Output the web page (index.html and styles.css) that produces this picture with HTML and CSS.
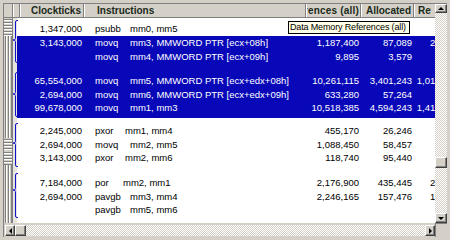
FILE: index.html
```html
<!DOCTYPE html>
<html>
<head>
<meta charset="utf-8">
<link rel="stylesheet" href="styles.css">
</head>
<body>
<div class="frame">
  <div class="main">
    <div class="hdr">
      <div class="hc ha"></div>
      <div class="hc hb"></div>
      <div class="hc hclk">Clockticks</div>
      <div class="hc hins">Instructions</div>
      <div class="hc hdmr"><span>Data Memory References (all)</span></div>
      <div class="hc hal">Allocated</div>
      <div class="hc hre">Retired</div>
      <div class="hc hfill"></div>
    </div>
    <div class="body">
      <div class="row hs h3"><div class="g"></div></div>
      <div class="row hs h15"><div class="g"></div><div class="c clk">1,347,000</div><div class="c ins"><span class="mn">psubb</span>mm0, mm5</div><div class="c dmr"></div><div class="c al"></div><div class="c re"></div></div>
      <div class="row sel h14"><div class="g"></div><div class="c clk">3,143,000</div><div class="c ins"><span class="mn">movq</span>mm3, MMWORD PTR [ecx+08h]</div><div class="c dmr">1,187,400</div><div class="c al">87,089</div><div class="c re">23,580</div></div>
      <div class="row sel h13"><div class="g"></div><div class="c clk"></div><div class="c ins"><span class="mn">movq</span>mm4, MMWORD PTR [ecx+09h]</div><div class="c dmr">9,895</div><div class="c al">3,579</div><div class="c re"></div></div>
      <div class="row sel h11"><div class="g"></div></div>
      <div class="row sel h14"><div class="g"></div><div class="c clk">65,554,000</div><div class="c ins"><span class="mn">movq</span>mm5, MMWORD PTR [ecx+edx+08h]</div><div class="c dmr">10,261,115</div><div class="c al">3,401,243</div><div class="c re">1,012,390</div></div>
      <div class="row sel h13"><div class="g"></div><div class="c clk">2,694,000</div><div class="c ins"><span class="mn">movq</span>mm6, MMWORD PTR [ecx+edx+09h]</div><div class="c dmr">633,280</div><div class="c al">57,264</div><div class="c re"></div></div>
      <div class="row sel h13"><div class="g"></div><div class="c clk">99,678,000</div><div class="c ins"><span class="mn">movq</span>mm1, mm3</div><div class="c dmr">10,518,385</div><div class="c al">4,594,243</div><div class="c re">1,415,220</div></div>
      <div class="row sel h4"><div class="g"></div></div>
      <div class="row h6"><div class="g"></div></div>
      <div class="row h14"><div class="g"></div><div class="c clk">2,245,000</div><div class="c ins"><span class="mn w30">pxor</span>mm1, mm4</div><div class="c dmr">455,170</div><div class="c al">26,246</div><div class="c re"></div></div>
      <div class="row hs h13"><div class="g"></div><div class="c clk">2,694,000</div><div class="c ins"><span class="mn">movq</span>mm2, mm5</div><div class="c dmr">1,088,450</div><div class="c al">58,457</div><div class="c re"></div></div>
      <div class="row hs h14"><div class="g"></div><div class="c clk">3,143,000</div><div class="c ins"><span class="mn w30">pxor</span>mm2, mm6</div><div class="c dmr">118,740</div><div class="c al">95,440</div><div class="c re"></div></div>
      <div class="row h11"><div class="g"></div></div>
      <div class="row h14"><div class="g"></div><div class="c clk">7,184,000</div><div class="c ins"><span class="mn w28">por</span>mm2, mm1</div><div class="c dmr">2,176,900</div><div class="c al">435,445</div><div class="c re">26,910</div></div>
      <div class="row h13"><div class="g"></div><div class="c clk">2,694,000</div><div class="c ins"><span class="mn">pavgb</span>mm3, mm4</div><div class="c dmr">2,246,165</div><div class="c al">157,476</div><div class="c re">15,075</div></div>
      <div class="row h14"><div class="g"></div><div class="c clk"></div><div class="c ins"><span class="mn">pavgb</span>mm5, mm6</div><div class="c dmr"></div><div class="c al"></div><div class="c re"></div></div>
      <div class="row fill"><div class="g"></div></div>
    </div>
    <svg class="braces" width="20" height="219" viewBox="4 4 20 219">
      <path d="M18 20.5H17Q15.5 20.5 15.5 22V38.5Q15.5 40 13 40Q15.5 40 15.5 41.5V61Q15.5 62.5 17 62.5H18"/>
      <path d="M18 72.5H17Q15.5 72.5 15.5 74V92.5Q15.5 94 13 94Q15.5 94 15.5 95.5V115Q15.5 116.5 17 116.5H18"/>
      <path d="M18 123.5H17Q15.5 123.5 15.5 125V141.5Q15.5 143 13 143Q15.5 143 15.5 144.5V165Q15.5 166.5 17 166.5H18"/>
      <path d="M18 173.5H17Q15.5 173.5 15.5 175V188.5Q15.5 190 13 190Q15.5 190 15.5 191.5V216Q15.5 217.5 17 217.5H18"/>
    </svg>
    <div class="tip">Data Memory References (all)</div>
  </div>
  <div class="vs">
    <div class="btn up"><i></i></div>
    <div class="track s1"></div>
    <div class="btn thumb"></div>
    <div class="track s2"></div>
    <div class="btn down"><i></i></div>
  </div>
  <div class="hsb">
    <div class="btn left"><i></i></div>
    <div class="btn hthumb"></div>
    <div class="track htrack"></div>
    <div class="btn right"><i></i></div>
  </div>
  <div class="corner"></div>
</div>
</body>
</html>
```
FILE: styles.css
```css
* { box-sizing: border-box; }
html, body { margin: 0; padding: 0; }
body {
  width: 450px;
  height: 240px;
  overflow: hidden;
  background: #d4d0c8;
  font-family: "Liberation Sans", Arial, sans-serif;
  font-size: 9.5px;
  color: #000;
}
.frame {
  margin: 3px 0 0 3px;
  width: 444px;
  height: 234px;
  border-left: 1px solid #808080;
  border-top: 1px solid #808080;
  display: grid;
  grid-template-columns: 431px 12px;
  grid-template-rows: 219px 14px;
}
.main {
  position: relative;
  overflow: hidden;
  display: flex;
  flex-direction: column;
  background: #fff;
}
.hdr {
  flex: none;
  display: flex;
  height: 14px;
  background: #d4d0c8;
  border-bottom: 1px solid #808080;
  font-weight: bold;
  font-size: 10px;
  color: #1a2a1a;
}
.hc {
  flex: none;
  display: flex;
  align-items: center;
  overflow: hidden;
  white-space: nowrap;
  border-left: 1px solid #fff;
  border-right: 1px solid #808080;
}
.ha { width: 9px; border-left: none; }
.hb { width: 7px; }
.hclk { width: 64px; justify-content: flex-end; padding-right: 2px; }
.hins { width: 222px; padding-left: 12px; }
.hdmr { width: 55px; justify-content: flex-end; padding-right: 1px; }
.hdmr span { flex: none; letter-spacing: 0.2px; }
.hal { width: 53px; justify-content: flex-end; padding-right: 2px; }
.hre { width: 17px; padding-left: 3px; border-right: none; }
.hfill { flex: 1; border: none; }
.body {
  flex: 1;
  display: flex;
  flex-direction: column;
}
.row {
  flex: none;
  display: flex;
  white-space: nowrap;
}
.row.fill { flex: 1; }
.h3 { height: 3px; }
.h4 { height: 4px; }
.h6 { height: 6px; }
.h11 { height: 11px; }
.h13 { height: 13px; line-height: 13px; }
.h14 { height: 14px; line-height: 14px; }
.h15 { height: 15px; line-height: 15px; }
.sel { background: #0808b8; color: #fff; }
.g {
  flex: none;
  width: 13px;
  background:
    linear-gradient(#808080, #808080) 8px 0 / 1px 100% no-repeat,
    linear-gradient(#e6e4de, #e6e4de) 9px 0 / 4px 100% no-repeat,
    repeating-linear-gradient(90deg, #d4d0c8 0 1px, #808080 1px 2px, #fff 2px 3px) 0 0 / 8px 100% no-repeat;
}
.hs .g {
  background:
    linear-gradient(#808080, #808080) 8px 0 / 1px 100% no-repeat,
    linear-gradient(#e6e4de, #e6e4de) 9px 0 / 4px 100% no-repeat,
    repeating-linear-gradient(180deg, #d4d0c8 0 1px, #808080 1px 2px, #fff 2px 3px) 0 0 / 8px 100% no-repeat;
}
.c { flex: none; overflow: hidden; }
.clk { width: 67px; text-align: right; padding-right: 2px; }
.ins { width: 222px; padding-left: 11px; }
.mn { display: inline-block; width: 35px; }
.mn.w30 { width: 30px; }
.mn.w28 { width: 28px; }
.dmr { width: 55px; text-align: right; padding-right: 2px; }
.al { width: 53px; text-align: right; padding-right: 2px; }
.re { width: 48px; text-align: right; padding-right: 3px; }
.braces {
  position: absolute;
  left: 0;
  top: 0;
  fill: none;
  stroke: #1010c8;
  stroke-width: 1;
}
.tip {
  position: absolute;
  left: 284px;
  top: 17px;
  width: 122px;
  height: 13px;
  border: 1px solid #000;
  background: #ffffe8;
  font-size: 9px;
  letter-spacing: -0.15px;
  line-height: 11px;
  padding-left: 1px;
  white-space: nowrap;
  overflow: hidden;
  color: #000;
}
.btn {
  flex: none;
  display: flex;
  align-items: center;
  justify-content: center;
  background: #d4d0c8;
  border-top: 1px solid #fff;
  border-left: 1px solid #fff;
  border-right: 1px solid #404040;
  border-bottom: 1px solid #404040;
  box-shadow: inset -1px -1px #808080;
}
.btn i { display: block; width: 0; height: 0; }
.up i { border-left: 3px solid transparent; border-right: 3px solid transparent; border-bottom: 3px solid #000; }
.down i { border-left: 3px solid transparent; border-right: 3px solid transparent; border-top: 3px solid #000; }
.left i { border-top: 3px solid transparent; border-bottom: 3px solid transparent; border-right: 3px solid #000; }
.right i { border-top: 3px solid transparent; border-bottom: 3px solid transparent; border-left: 3px solid #000; }
.track {
  background-color: #d4d0c8;
  background-image: repeating-conic-gradient(#fff 0 25%, #d4d0c8 0 50%);
  background-size: 2px 2px;
}
.vs {
  display: flex;
  flex-direction: column;
}
.up { height: 9px; }
.s1 { height: 144px; flex: none; }
.thumb { height: 11px; }
.s2 { height: 45px; flex: none; }
.down { height: 10px; }
.hsb {
  display: flex;
  padding: 2px 0 1px 1px;
  background: #d4d0c8;
}
.left, .right { width: 10px; }
.hthumb { width: 11px; }
.htrack { flex: 1; }
.corner {
  background: #d4d0c8;
  border-top: 1px solid #808080;
  border-left: 1px solid #808080;
}
```
